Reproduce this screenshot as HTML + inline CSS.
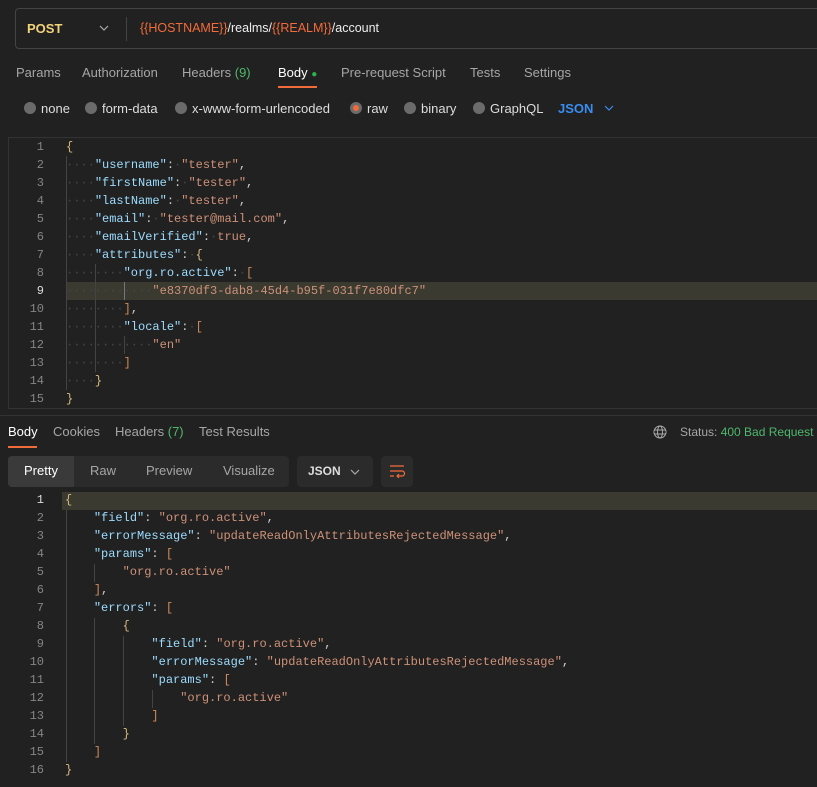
<!DOCTYPE html>
<html><head><style>
*{margin:0;padding:0;box-sizing:border-box}
body{width:817px;height:787px;background:#212121;font-family:"Liberation Sans",sans-serif;color:#ccc;position:relative;overflow:hidden;font-size:13px}
.a{position:absolute;white-space:pre}
.url{position:absolute;left:15px;top:8px;width:812px;height:41px;border:1px solid #444;border-radius:4px}
.code{font-family:"Liberation Mono",monospace;font-size:12px;line-height:18px}
.ln{position:absolute;width:30px;text-align:right;color:#858585;font-family:"Liberation Mono",monospace;font-size:12px;line-height:18px}
.k{color:#9cdcfe}.s{color:#ce9178}.d{color:#464646}.b{color:#d7ba7d}.br{color:#d08a5a}.t{color:#ce9178}
.tab{position:absolute;top:65px;color:#a6a6a6;font-size:13px}
.rad{position:absolute;top:102px;width:12px;height:12px;border-radius:50%;background:#6b6b6b}
.rl{position:absolute;top:101px;color:#ddd;font-size:13px}
.guide{position:absolute;width:1px;background:#444}
</style></head><body>
<div class="url"></div>
<div class="a" style="left:27px;top:21px;color:#f2d47a;font-weight:bold;font-size:13px">POST</div>
<svg class="a" style="left:99px;top:25px" width="10" height="6"><path d="M1 1l4 4 4-4" stroke="#aaa" fill="none" stroke-width="1.2"/></svg>
<div class="a" style="left:126px;top:17px;width:1px;height:24px;background:#444"></div>
<div class="a" style="left:140px;top:21px;font-size:12.5px;color:#eee"><span style="color:#f26b3a">{{HOSTNAME}}</span>/realms/<span style="color:#f26b3a">{{REALM}}</span>/account</div>

<div class="tab" style="left:16px">Params</div>
<div class="tab" style="left:82px">Authorization</div>
<div class="tab" style="left:182px">Headers <span style="color:#4eb86b">(9)</span></div>
<div class="tab" style="left:278px;color:#fff">Body <span style="color:#2bb24c;font-size:10px">●</span></div>
<div class="a" style="left:278px;top:86px;width:39px;height:2px;background:#f26b3a"></div>
<div class="tab" style="left:341px">Pre-request Script</div>
<div class="tab" style="left:470px">Tests</div>
<div class="tab" style="left:524px">Settings</div>

<div class="rad" style="left:24px"></div><div class="rl" style="left:41px">none</div>
<div class="rad" style="left:85px"></div><div class="rl" style="left:102px">form-data</div>
<div class="rad" style="left:175px"></div><div class="rl" style="left:192px">x-www-form-urlencoded</div>
<div class="rad" style="left:350px;background:#6b6b6b"><div style="position:absolute;left:3px;top:3px;width:6px;height:6px;border-radius:50%;background:#f26b3a"></div></div><div class="rl" style="left:367px">raw</div>
<div class="rad" style="left:404px"></div><div class="rl" style="left:421px">binary</div>
<div class="rad" style="left:473px"></div><div class="rl" style="left:490px">GraphQL</div>
<div class="rl" style="left:558px;color:#3b8cf0;font-weight:bold">JSON</div>
<svg class="a" style="left:604px;top:105px" width="10" height="6"><path d="M1 1l4 4 4-4" stroke="#3b8cf0" fill="none" stroke-width="1.2"/></svg>

<div class="a" style="left:8px;top:137px;width:820px;height:272px;border:1px solid #333;border-right:none"></div>
<div class="a" style="left:66px;top:282px;width:751px;height:18px;background:#3a3a30"></div>
<div class="guide" style="left:66px;top:156px;height:234px"></div>
<div class="guide" style="left:95px;top:264px;height:108px"></div>
<div class="guide" style="left:124px;top:282px;height:18px;background:#777"></div>
<div class="guide" style="left:124px;top:336px;height:18px"></div>

<div class="ln" style="left:14px;top:138px">1<br>2<br>3<br>4<br>5<br>6<br>7<br>8<br><span style="color:#ddd">9</span><br>10<br>11<br>12<br>13<br>14<br>15</div>
<div class="a code" style="left:66px;top:138px"><span class="b">{</span>
<span class="d">····</span><span class="k">"username"</span>:<span class="d">·</span><span class="s">"tester"</span>,
<span class="d">····</span><span class="k">"firstName"</span>:<span class="d">·</span><span class="s">"tester"</span>,
<span class="d">····</span><span class="k">"lastName"</span>:<span class="d">·</span><span class="s">"tester"</span>,
<span class="d">····</span><span class="k">"email"</span>:<span class="d">·</span><span class="s">"tester@mail.com"</span>,
<span class="d">····</span><span class="k">"emailVerified"</span>:<span class="d">·</span><span class="s">true</span>,
<span class="d">····</span><span class="k">"attributes"</span>:<span class="d">·</span><span class="b">{</span>
<span class="d">········</span><span class="k">"org.ro.active"</span>:<span class="d">·</span><span class="br">[</span>
<span class="d">············</span><span class="s">"e8370df3-dab8-45d4-b95f-031f7e80dfc7"</span>
<span class="d">········</span><span class="br">]</span>,
<span class="d">········</span><span class="k">"locale"</span>:<span class="d">·</span><span class="br">[</span>
<span class="d">············</span><span class="s">"en"</span>
<span class="d">········</span><span class="br">]</span>
<span class="d">····</span><span class="b">}</span>
<span class="b">}</span></div>

<div class="a" style="left:0;top:415px;width:817px;height:1px;background:#333"></div>
<div class="tab" style="left:8px;top:424px;color:#fff">Body</div>
<div class="a" style="left:8px;top:446px;width:29px;height:2px;background:#f26b3a"></div>
<div class="tab" style="left:53px;top:424px">Cookies</div>
<div class="tab" style="left:115px;top:424px">Headers <span style="color:#4eb86b">(7)</span></div>
<div class="tab" style="left:199px;top:424px">Test Results</div>
<svg class="a" style="left:653px;top:425px" width="14" height="14" viewBox="0 0 14 14" fill="none" stroke="#aaa" stroke-width="1"><circle cx="7" cy="7" r="6"/><ellipse cx="7" cy="7" rx="2.5" ry="6"/><path d="M1 5h12M1 9h12"/></svg>
<div class="a" style="left:680px;top:425px;font-size:12px;color:#a6a6a6">Status: <span style="color:#4eb86b">400 Bad Request</span></div>

<div class="a" style="left:8px;top:456px;width:281px;height:31px;background:#2b2b2b;border-radius:4px"></div>
<div class="a" style="left:8px;top:456px;width:66px;height:31px;background:#3a3a3a;border-radius:4px 0 0 4px"></div>
<div class="a" style="left:24px;top:463px;color:#fff">Pretty</div>
<div class="a" style="left:90px;top:463px;color:#a6a6a6">Raw</div>
<div class="a" style="left:146px;top:463px;color:#a6a6a6">Preview</div>
<div class="a" style="left:223px;top:463px;color:#a6a6a6">Visualize</div>
<div class="a" style="left:297px;top:456px;width:76px;height:31px;background:#2b2b2b;border-radius:4px"></div>
<div class="a" style="left:308px;top:464px;font-weight:bold;font-size:12px;color:#ddd">JSON</div>
<svg class="a" style="left:350px;top:469px" width="10" height="6"><path d="M1 1l4 4 4-4" stroke="#aaa" fill="none" stroke-width="1.2"/></svg>
<div class="a" style="left:381px;top:456px;width:32px;height:31px;background:#2b2b2b;border-radius:4px"></div>
<svg class="a" style="left:389px;top:464px" width="16" height="14" fill="none" stroke="#f26b3a" stroke-width="1.2"><path d="M1 2h14M1 7h12a2.5 2.5 0 0 1 0 5H8M10 10l-2 2 2 2M1 12h4"/></svg>

<div class="a" style="left:62px;top:492px;width:755px;height:18px;background:#3a3a30"></div>
<div class="guide" style="left:66px;top:510px;height:252px"></div>
<div class="guide" style="left:94px;top:564px;height:18px"></div>
<div class="guide" style="left:94px;top:618px;height:126px"></div>
<div class="guide" style="left:123px;top:636px;height:90px"></div>
<div class="guide" style="left:152px;top:690px;height:18px"></div>
<div class="ln" style="left:14px;top:491px"><span style="color:#ddd">1</span><br>2<br>3<br>4<br>5<br>6<br>7<br>8<br>9<br>10<br>11<br>12<br>13<br>14<br>15<br>16</div>
<div class="a code" style="left:65px;top:491px"><span class="b">{</span>
    <span class="k">"field"</span>: <span class="s">"org.ro.active"</span>,
    <span class="k">"errorMessage"</span>: <span class="s">"updateReadOnlyAttributesRejectedMessage"</span>,
    <span class="k">"params"</span>: <span class="br">[</span>
        <span class="s">"org.ro.active"</span>
    <span class="br">]</span>,
    <span class="k">"errors"</span>: <span class="br">[</span>
        <span class="b">{</span>
            <span class="k">"field"</span>: <span class="s">"org.ro.active"</span>,
            <span class="k">"errorMessage"</span>: <span class="s">"updateReadOnlyAttributesRejectedMessage"</span>,
            <span class="k">"params"</span>: <span class="br">[</span>
                <span class="s">"org.ro.active"</span>
            <span class="br">]</span>
        <span class="b">}</span>
    <span class="br">]</span>
<span class="b">}</span></div>
</body></html>
